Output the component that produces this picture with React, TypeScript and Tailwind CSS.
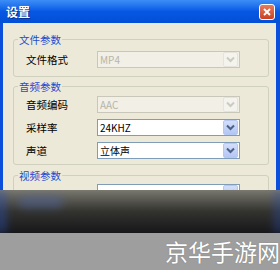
import React from "react";

const font = { fontFamily: '"Noto Sans CJK SC", "Liberation Sans", sans-serif' };

function Chevron({ color }: { color: string }) {
  return (
    <svg width="9" height="7" viewBox="0 0 9 7">
      <path d="M1 1.5 L4.5 5 L8 1.5" fill="none" stroke={color} strokeWidth="2" />
    </svg>
  );
}

function Combo({ value, disabled }: { value: string; disabled?: boolean }) {
  return (
    <div
      className={
        "flex h-[17px] w-[143px] items-center border " +
        (disabled ? "border-[#c9c7ba] bg-[#f1efe6]" : "border-[#7f9db9] bg-white")
      }
    >
      <div
        className={
          "flex-1 pl-[2px] text-[10px] leading-[15px] " +
          (disabled ? "text-[#b8b5a6]" : "text-black")
        }
      >
        {value}
      </div>
      <div
        className={
          "mr-[1px] flex h-[15px] w-[15px] items-center justify-center rounded-[2px] border " +
          (disabled
            ? "border-[#e6e4da] bg-[#f4f3ee]"
            : "border-[#b4c8f6] bg-gradient-to-b from-[#d3defa] to-[#b3c6f4]")
        }
      >
        <Chevron color={disabled ? "#cdcbc0" : "#4d6185"} />
      </div>
    </div>
  );
}

function Row({ label, children }: { label: string; children: React.ReactNode }) {
  return (
    <div className="flex items-center pl-[8px]">
      <div className="w-[71px] text-[10.5px] leading-[17px] text-black">{label}</div>
      {children}
    </div>
  );
}

function Group({
  title,
  className,
  children,
}: {
  title: string;
  className?: string;
  children: React.ReactNode;
}) {
  return (
    <fieldset className={"rounded-[3px] border border-[#d0d0bf] px-[4px] " + (className ?? "")}>
      <legend className="px-[1px] text-[10.5px] leading-[13px] text-[#1f4bd0]">{title}</legend>
      {children}
    </fieldset>
  );
}

export default function App() {
  return (
    <div className="h-[270px] w-[280px] overflow-hidden bg-[#9e9e9e]" style={font}>
      {/* Dialog */}
      <div className="flex h-[190px] flex-col">
        {/* Title bar */}
        <div className="flex h-[23px] items-center justify-between bg-gradient-to-b from-[#3c8ef7] via-[#0857e4] to-[#0350d6] pl-[6px] pr-[5px]">
          <span className="text-[12px] font-bold leading-none text-white [text-shadow:1px_1px_0_#0a2f8a]">
            设置
          </span>
          <div className="flex h-[16px] w-[16px] items-center justify-center rounded-[3px] border border-white bg-gradient-to-b from-[#e77a5c] to-[#c9401f]">
            <svg width="10" height="10" viewBox="0 0 10 10">
              <path d="M2 2 L8 8 M8 2 L2 8" stroke="white" strokeWidth="1.9" />
            </svg>
          </div>
        </div>
        {/* Body */}
        <div className="flex-1 overflow-hidden border-l-[3px] border-r-[4px] border-l-[#0b4fdb] border-r-[#0b4fdb] bg-[#ece9d8] pl-[10px] pr-[7px] pt-[10px]">
          <Group title="文件参数" className="pb-[8px] pt-[5px]">
            <Row label="文件格式">
              <Combo value="MP4" disabled />
            </Row>
          </Group>
          <Group title="音频参数" className="mt-[3px] pb-[5px] pt-[3px]">
            <div className="flex flex-col gap-[6px]">
              <Row label="音频编码">
                <Combo value="AAC" disabled />
              </Row>
              <Row label="采样率">
                <Combo value="24KHZ" />
              </Row>
              <Row label="声道">
                <Combo value="立体声" />
              </Row>
            </div>
          </Group>
          <Group title="视频参数" className="mt-[4px] pt-[2px]">
            <Row label="">
              <Combo value="" />
            </Row>
          </Group>
        </div>
      </div>
      {/* Blurred band */}
      <div className="relative h-[43px] overflow-hidden bg-gradient-to-b from-[#7a7970] via-[#33332f] to-[#17171a]">
        <div className="absolute left-[-4px] top-[0px] h-[43px] w-[10px] bg-[#2c4fb0] opacity-50 blur-[4px]" />
        <div className="absolute left-[18px] top-[6px] h-[12px] w-[45px] rounded-full bg-[#4a68b8] opacity-40 blur-[5px]" />
        <div className="absolute right-[-4px] top-[0px] h-[43px] w-[10px] bg-[#2c4fb0] opacity-40 blur-[4px]" />
      </div>
      {/* Watermark strip */}
      <div className="h-[37px] whitespace-nowrap bg-[#9e9e9e] pl-[165px] pt-[7px] text-[23px] leading-[23px] text-white [text-shadow:0_0_1px_#6b6b6b]">
        京华手游网
      </div>
    </div>
  );
}
